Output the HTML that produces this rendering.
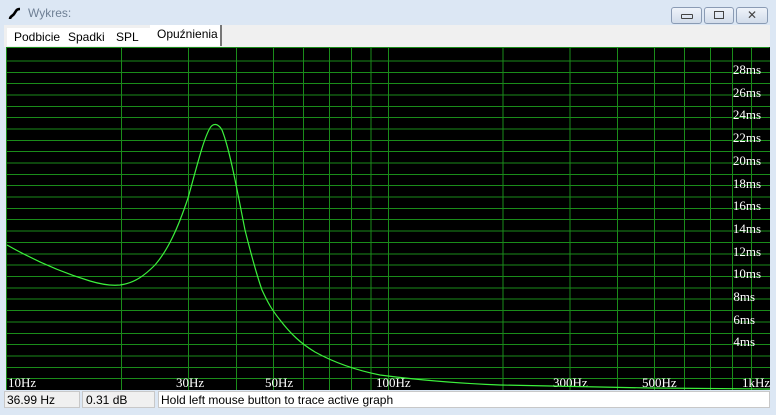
<!DOCTYPE html>
<html><head><style>
body{margin:0;width:776px;height:415px;overflow:hidden;background:#dce7f4;font-family:"Liberation Sans",sans-serif;position:relative}
.t{position:absolute;left:28px;top:6px;font-size:12px;color:#6e7f94}
.btn{position:absolute;top:7px;height:15px;border:1px solid #8a9bb4;border-radius:3px;background:linear-gradient(#eef3fa,#d2dcea)}
.tabs{position:absolute;left:4px;top:25px;width:766px;height:22px;background:#f0f0f0}
.tab{position:absolute;top:3px;height:18px;font-size:12px;line-height:18px;color:#000}
.sb{position:absolute;top:391px;height:17px;background:#f0f0f0;border:1px solid #c8c8c8;font-size:12px;line-height:17px;padding-left:2px;box-sizing:border-box}
</style></head><body>
<svg style="position:absolute;left:8px;top:7px" width="14" height="14"><path d="M2 12 C2 9,5 9,6 7 L8 4 C9 2,11 2,12 2" stroke="#000" stroke-width="2.6" fill="none"/></svg>
<div class="t">Wykres:</div>
<div class="btn" style="left:671px;width:29px"><div style="position:absolute;left:9px;top:6px;width:10px;height:3px;border:1px solid #444;border-radius:1px"></div></div>
<div class="btn" style="left:704px;width:28px"><div style="position:absolute;left:9px;top:3px;width:8px;height:6px;border:1px solid #444"></div></div>
<div class="btn" style="left:736px;width:30px;text-align:center;font-size:12px;line-height:15px;color:#444">✕</div>
<div class="tabs">
<div class="tab" style="left:3px;width:53px;border-right:2px solid #777;padding-left:7px;background:#fff">Podbicie</div>
<div class="tab" style="left:60px;width:45px;border-right:2px solid #777;padding-left:4px;background:#fff">Spadki</div>
<div class="tab" style="left:108px;width:36px;padding-left:4px;background:#fff">SPL</div>
<div class="tab" style="left:146px;top:0;height:21px;width:63px;border-right:2px solid #777;padding-left:7px;background:#fff;line-height:18px">Opuźnienia</div>
</div>
<svg style="position:absolute;left:0;top:0" width="776" height="415">
<rect x="6" y="47" width="764" height="343" fill="#000"/>
<g stroke="#1a8c1a" stroke-width="1">
<line x1="6.5" y1="47.5" x2="769.5" y2="47.5"/>
<line x1="6.5" y1="47" x2="6.5" y2="390"/>
<line x1="121.5" y1="47" x2="121.5" y2="390"/><line x1="188.5" y1="47" x2="188.5" y2="390"/><line x1="236.5" y1="47" x2="236.5" y2="390"/><line x1="273.5" y1="47" x2="273.5" y2="390"/><line x1="303.5" y1="47" x2="303.5" y2="390"/><line x1="329.5" y1="47" x2="329.5" y2="390"/><line x1="351.5" y1="47" x2="351.5" y2="390"/><line x1="371" y1="47" x2="371" y2="390"/><line x1="388.5" y1="47" x2="388.5" y2="390"/><line x1="503" y1="47" x2="503" y2="390"/><line x1="570" y1="47" x2="570" y2="390"/><line x1="617.5" y1="47" x2="617.5" y2="390"/><line x1="654.5" y1="47" x2="654.5" y2="390"/><line x1="684.5" y1="47" x2="684.5" y2="390"/><line x1="710.5" y1="47" x2="710.5" y2="390"/><line x1="732.5" y1="47" x2="732.5" y2="390"/><line x1="751.5" y1="47" x2="751.5" y2="390"/>
<line x1="6" y1="378.5" x2="770" y2="378.5"/><line x1="6" y1="367.5" x2="770" y2="367.5"/><line x1="6" y1="356" x2="770" y2="356"/><line x1="6" y1="344.5" x2="770" y2="344.5"/><line x1="6" y1="333.5" x2="770" y2="333.5"/><line x1="6" y1="322" x2="770" y2="322"/><line x1="6" y1="310.5" x2="770" y2="310.5"/><line x1="6" y1="299" x2="770" y2="299"/><line x1="6" y1="288" x2="770" y2="288"/><line x1="6" y1="276.5" x2="770" y2="276.5"/><line x1="6" y1="265" x2="770" y2="265"/><line x1="6" y1="254" x2="770" y2="254"/><line x1="6" y1="242.5" x2="770" y2="242.5"/><line x1="6" y1="231" x2="770" y2="231"/><line x1="6" y1="219.5" x2="770" y2="219.5"/><line x1="6" y1="208.5" x2="770" y2="208.5"/><line x1="6" y1="197" x2="770" y2="197"/><line x1="6" y1="185.5" x2="770" y2="185.5"/><line x1="6" y1="174.5" x2="770" y2="174.5"/><line x1="6" y1="163" x2="770" y2="163"/><line x1="6" y1="151.5" x2="770" y2="151.5"/><line x1="6" y1="140.5" x2="770" y2="140.5"/><line x1="6" y1="129" x2="770" y2="129"/><line x1="6" y1="117.5" x2="770" y2="117.5"/><line x1="6" y1="106.5" x2="770" y2="106.5"/><line x1="6" y1="95" x2="770" y2="95"/><line x1="6" y1="83.5" x2="770" y2="83.5"/><line x1="6" y1="72.5" x2="770" y2="72.5"/><line x1="6" y1="61" x2="770" y2="61"/>
</g>
<g fill="#fff" font-family="Liberation Serif,serif" font-size="13" text-anchor="end">
<text x="761" y="74">28ms</text><text x="761" y="97">26ms</text><text x="761" y="119">24ms</text><text x="761" y="142">22ms</text><text x="761" y="165">20ms</text><text x="761" y="188">18ms</text><text x="761" y="210">16ms</text><text x="761" y="233">14ms</text><text x="761" y="256">12ms</text><text x="761" y="278">10ms</text><text x="755" y="301">8ms</text><text x="755" y="324">6ms</text><text x="755" y="346">4ms</text>
</g>
<g fill="#fff" font-family="Liberation Serif,serif" font-size="13">
<text x="8" y="387">10Hz</text><text x="176" y="387">30Hz</text><text x="265" y="387">50Hz</text><text x="376" y="387">100Hz</text><text x="553" y="387">300Hz</text><text x="642" y="387">500Hz</text><text x="742" y="387">1kHz</text>
</g>
<path d="M7 245 C30 258,60 272,90 281 C100 284,110 286,120 285 C135 283,145 275,155 265 C168 250,178 228,188 198 C196 170,203 140,210 128 C213 123,218 123,222 130 C230 150,238 195,245 230 C250 250,255 270,262 290 C268 303,272 310,280 320 C290 333,300 343,315 352 C335 363,355 370,380 375 C410 379,450 383,500 385 C550 386,600 387,650 388 L770 389" stroke="#3cf03c" stroke-width="1.2" fill="none"/>
</svg>
<div class="sb" style="left:4px;width:76px">36.99 Hz</div>
<div class="sb" style="left:82px;width:73px;padding-left:3px">0.31 dB</div>
<div class="sb" style="left:158px;width:612px;background:#fff">Hold left mouse button to trace active graph</div>
</body></html>
